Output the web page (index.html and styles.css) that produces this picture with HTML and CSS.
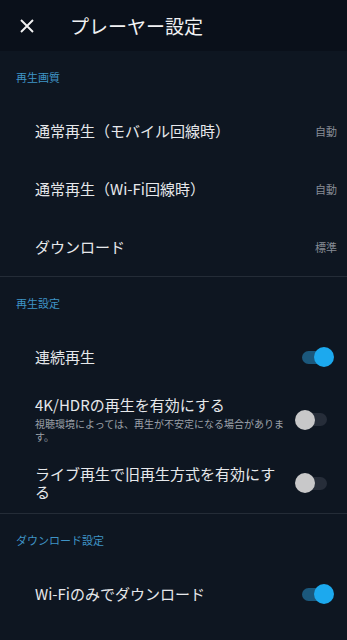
FILE: index.html
```html
<!DOCTYPE html>
<html lang="ja">
<head>
<meta charset="utf-8">
<title>プレーヤー設定</title>
<link rel="stylesheet" href="styles.css">
</head>
<body>
<div class="app">
  <header class="appbar">
    <span class="close" aria-label="閉じる">
      <svg width="14" height="14" viewBox="0 0 14 14"><path d="M1 1L13 13M13 1L1 13" stroke="#f2f2f2" stroke-width="1.9" stroke-linecap="butt"/></svg>
    </span>
    <h1 class="title">プレーヤー設定</h1>
  </header>

  <section class="group">
    <div class="group-head">再生画質</div>
    <div class="row">
      <div class="row-text"><div class="row-title">通常再生（モバイル回線時）</div></div>
      <div class="row-value">自動</div>
    </div>
    <div class="row">
      <div class="row-text"><div class="row-title">通常再生（Wi-Fi回線時）</div></div>
      <div class="row-value">自動</div>
    </div>
    <div class="row">
      <div class="row-text"><div class="row-title">ダウンロード</div></div>
      <div class="row-value">標準</div>
    </div>
  </section>

  <section class="group">
    <div class="group-head">再生設定</div>
    <div class="row">
      <div class="row-text"><div class="row-title">連続再生</div></div>
      <span class="switch on"><span class="track"></span><span class="thumb"></span></span>
    </div>
    <div class="row row-sub">
      <div class="row-text">
        <div class="row-title">4K/HDRの再生を有効にする</div>
        <div class="row-desc">視聴環境によっては、再生が不安定になる場合があります。</div>
      </div>
      <span class="switch"><span class="track"></span><span class="thumb"></span></span>
    </div>
    <div class="row row-wrap">
      <div class="row-text"><div class="row-title">ライブ再生で旧再生方式を有効にする</div></div>
      <span class="switch"><span class="track"></span><span class="thumb"></span></span>
    </div>
  </section>

  <section class="group last">
    <div class="group-head">ダウンロード設定</div>
    <div class="row">
      <div class="row-text"><div class="row-title">Wi-Fiのみでダウンロード</div></div>
      <span class="switch on"><span class="track"></span><span class="thumb"></span></span>
    </div>
  </section>
</div>
</body>
</html>
```

FILE: styles.css
```css
* { box-sizing: border-box; }
html, body {
  margin: 0;
  padding: 0;
  background: #0e1621;
}
body {
  font-family: "Noto Sans CJK JP", sans-serif;
  font-weight: 400;
  color: #e6e8eb;
  width: 347px;
  height: 640px;
  overflow: hidden;
}
.app {
  display: flex;
  flex-direction: column;
}
.appbar {
  height: 51px;
  background: #0a101a;
  display: flex;
  align-items: center;
  padding-left: 20px;
}
.close {
  width: 14px;
  height: 14px;
  display: flex;
  margin-top: 1px;
}
.title {
  margin: 0 0 0 36px;
  font-size: 19px;
  font-weight: 400;
  color: #f0f1f3;
  line-height: 24px;
}
.group {
  border-bottom: 1px solid #242c37;
}
.group.last { border-bottom: none; }
.group-head {
  height: 51px;
  display: flex;
  align-items: center;
  padding-left: 16px;
  font-size: 11px;
  color: #3f94c6;
}
.row {
  min-height: 58px;
  display: flex;
  align-items: center;
  padding: 0 13px 0 35px;
}
.row-text {
  width: 253px;
  flex: none;
}
.row-title {
  font-size: 15px;
  line-height: 18px;
  color: #e6e8eb;
}
.row-desc {
  font-size: 10px;
  line-height: 13px;
  color: #9ca1a9;
  margin-top: 3px;
}
.row-sub {
  padding-top: 10px;
  padding-bottom: 10px;
}
.row-wrap {
  padding-top: 12px;
  padding-bottom: 12px;
}
.row-value {
  margin-left: auto;
  margin-right: -3px;
  font-size: 11px;
  color: #878c95;
}
.switch {
  margin-left: auto;
  position: relative;
  width: 40px;
  height: 20px;
  flex: none;
}
.switch .track {
  position: absolute;
  left: 8px;
  top: 3.5px;
  width: 25px;
  height: 13px;
  border-radius: 7px;
  background: #262d39;
}
.switch .thumb {
  position: absolute;
  left: 1px;
  top: 0;
  width: 20px;
  height: 20px;
  border-radius: 50%;
  background: #c8c8c9;
}
.switch.on .track { background: #1b587c; }
.switch.on .thumb {
  left: 20px;
  background: #1ca9ee;
}
```
